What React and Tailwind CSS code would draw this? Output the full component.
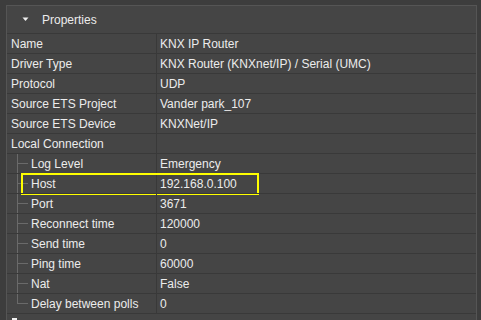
import React from 'react';

const rows = [
  { name: 'Name', value: 'KNX IP Router' },
  { name: 'Driver Type', value: 'KNX Router (KNXnet/IP) / Serial (UMC)' },
  { name: 'Protocol', value: 'UDP' },
  { name: 'Source ETS Project', value: 'Vander park_107' },
  { name: 'Source ETS Device', value: 'KNXNet/IP' },
  { name: 'Local Connection', value: '' },
  { name: 'Log Level', value: 'Emergency', child: true },
  { name: 'Host', value: '192.168.0.100', child: true, marked: true },
  { name: 'Port', value: '3671', child: true },
  { name: 'Reconnect time', value: '120000', child: true },
  { name: 'Send time', value: '0', child: true },
  { name: 'Ping time', value: '60000', child: true },
  { name: 'Nat', value: 'False', child: true },
  { name: 'Delay between polls', value: '0', child: true, last: true },
];

const Row = ({ name, value, child, marked, last }) => {
  return (
    <div className="relative grid grid-cols-[150px_1fr] h-[20px] border-t border-[#393939]">
      <div className="relative flex items-center border-r border-[#393939] pl-[4px]">
        {child && (
          <>
            {/* tree branch */}
            <span
              className={
                last
                  ? 'absolute left-[10px] top-0 h-[10px] w-px bg-[#6a6a6a]'
                  : 'absolute left-[10px] top-0 h-full w-px bg-[#6a6a6a]'
              }
            />
            <span className="absolute left-[10px] top-[9px] w-[11px] h-px bg-[#6a6a6a]" />
          </>
        )}
        <span className={child ? 'pl-[20px]' : ''}>{name}</span>
      </div>
      <div className="flex items-center pl-[3px]">{value}</div>

      {marked && (
        <div className="absolute left-[14px] top-[-1px] w-[238px] h-[22px] border-2 border-[#ffff00] pointer-events-none" />
      )}
    </div>
  );
};

const App = () => {
  return (
    <div
      className="w-[481px] h-[320px] overflow-hidden bg-[#3d3d3d] pl-[6px] pt-[5px] pr-[4px] text-[12px] text-[#ececec]"
      style={{ fontFamily: '"Liberation Sans", Arial, sans-serif' }}
    >
      <div className="h-full border-l border-t border-r border-[#555555] bg-[#454545]">
        {/* Header */}
        <div className="h-[27px] flex items-center">
          <svg width="7" height="5" viewBox="0 0 7 5" className="ml-[15px] mr-[13px] mt-[-1px]">
            <path d="M0.5 0.5 L3.5 4 L6.5 0.5 Z" fill="#f0f0f0" />
          </svg>
          <span>Properties</span>
        </div>

        {/* Property grid */}
        <div className="border-b border-[#393939]">
          {rows.map((r) => (
            <Row key={r.name} {...r} />
          ))}
        </div>

        <div className="ml-[5px] mt-[4px] w-[5px] h-[3px] bg-[#f0f0f0]" />
      </div>
    </div>
  );
};

export default App;
